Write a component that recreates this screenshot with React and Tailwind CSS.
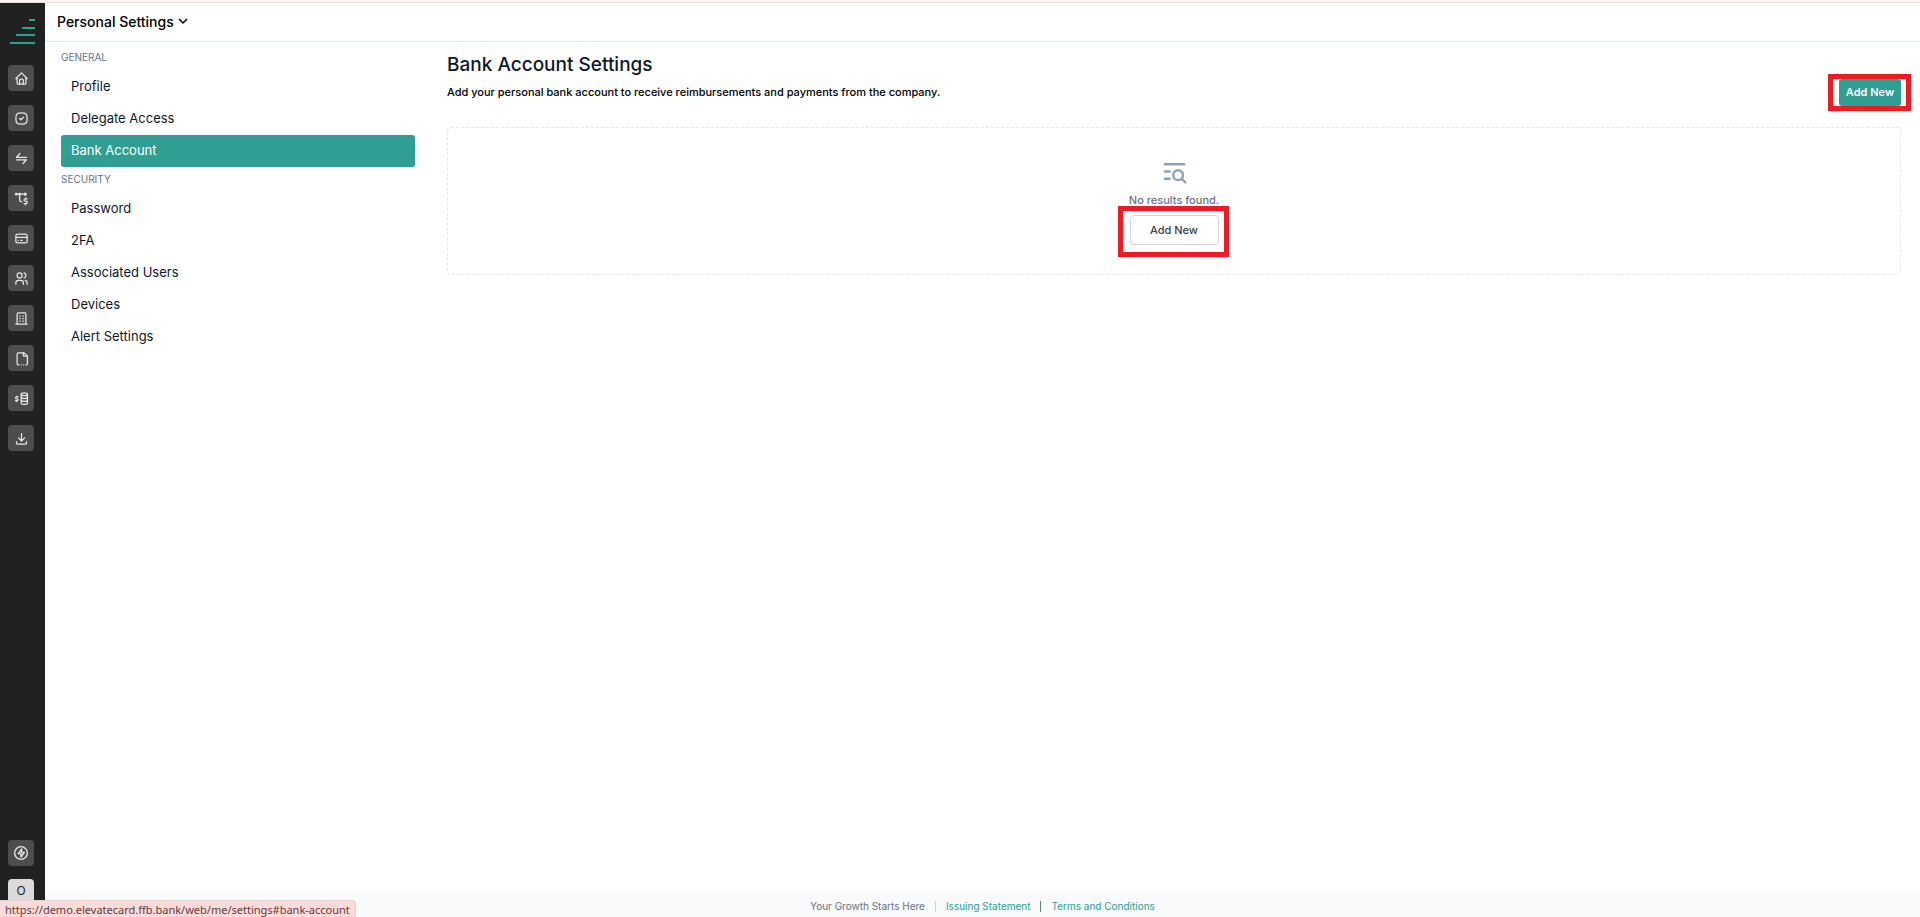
import clsx from 'clsx'

const NAV = [
  {
    title: 'General',
    items: ['Profile', 'Delegate Access', 'Bank Account'],
  },
  {
    title: 'Security',
    items: ['Password', '2FA', 'Associated Users', 'Devices', 'Alert Settings'],
  },
]

const ICONS = {
  Home: (
    <>
      <path d="M5 12H3l9-9 9 9h-2" />
      <path d="M5 12v7a2 2 0 0 0 2 2h10a2 2 0 0 0 2-2v-7" />
      <path d="M9 21v-6a2 2 0 0 1 2-2h2a2 2 0 0 1 2 2v6" />
    </>
  ),
  Approvals: (
    <>
      <path d="M9 12l2 2 4-4" />
      <path d="M12 3c7.2 0 9 1.8 9 9s-1.8 9-9 9-9-1.8-9-9 1.8-9 9-9z" />
    </>
  ),
  Transactions: (
    <>
      <path d="M20 10H4l5.5-6" />
      <path d="M4 14h16l-5.5 6" />
    </>
  ),
  'Spend Rules': (
    <>
      <circle cx="3.5" cy="5" r="1.2" fill="currentColor" />
      <circle cx="9" cy="5" r="1.2" fill="currentColor" />
      <circle cx="18" cy="5" r="1.6" fill="currentColor" />
      <path d="M4 5h13M9 5v9a3 3 0 0 0 3 3h.5" />
      <path d="M21 12.5h-3a1.8 1.8 0 0 0 0 3.8h1.400a1.800 1.800 0 0 1 0 3.700H16M18.500 11v1.500M18.500 20v2" />
    </>
  ),
  Cards: (
    <>
      <rect x="3" y="5" width="18" height="14" rx="3" />
      <path d="M3 10h18M7 15h.01M11 15h2" />
    </>
  ),
  Users: (
    <>
      <circle cx="9" cy="7" r="4" />
      <path d="M3 21v-2a4 4 0 0 1 4-4h4a4 4 0 0 1 4 4v2" />
      <path d="M16 3.13a4 4 0 0 1 0 7.75M21 21v-2a4 4 0 0 0-3-3.85" />
    </>
  ),
  Company: (
    <>
      <path d="M3 21h18M5 21V5a2 2 0 0 1 2-2h10a2 2 0 0 1 2 2v16" />
      <path d="M9 8h1M9 12h1M9 16h1M14 8h1M14 12h1M14 16h1" />
    </>
  ),
  Statements: (
    <>
      <path d="M15 3v4a1 1 0 0 0 1 1h5" />
      <path d="M8 22H7a2 2 0 0 1-2-2V5a2 2 0 0 1 2-2h9l5.500 5.500V20a2 2 0 0 1-2 2H19M12 22h.01M15.500 22h.01" />
    </>
  ),
  Rebates: (
    <>
      <ellipse cx="16.5" cy="5" rx="5" ry="2.2" />
      <path d="M11.500 5v14c0 1.300 2.200 2.400 5 2.400s5-1.100 5-2.400V5" />
      <path d="M11.500 9.700c0 1.300 2.200 2.300 5 2.300s5-1 5-2.300M11.500 14.400c0 1.300 2.200 2.300 5 2.300s5-1 5-2.300" />
      <path d="M6.500 9.500H4a1.500 1.500 0 0 0 0 3h1a1.500 1.500 0 0 1 0 3H2.500M4.500 8v1.500M4.500 15.500V17" />
    </>
  ),
  Downloads: (
    <>
      <path d="M4 17v2a2 2 0 0 0 2 2h12a2 2 0 0 0 2-2v-2" />
      <path d="M7 11l5 5 5-5M12 4v12" />
    </>
  ),
}

function StrokeIcon({ children, className }) {
  return (
    <svg
      className={className}
      viewBox="0 0 24 24"
      fill="none"
      stroke="currentColor"
      strokeWidth="2"
      strokeLinecap="round"
      strokeLinejoin="round"
      aria-hidden="true"
    >
      {children}
    </svg>
  )
}

function RailButton({ label, children }) {
  return (
    <button
      aria-label={label}
      className="flex size-[26px] items-center justify-center rounded bg-[#4d4d4d] text-[#e6e6e6]"
    >
      {children}
    </button>
  )
}

function Rail() {
  return (
    <aside className="flex w-[45px] shrink-0 flex-col bg-[#212121] px-2 pt-4 pb-3">
      <a href="#home" aria-label="Dashboard" className="block">
        <svg className="h-[25px] w-[27px] text-[#2f9e93]" viewBox="0 0 27 25" fill="currentColor" aria-hidden="true">
          <rect x="21" y="0" width="6" height="2" />
          <rect x="14" y="8" width="13" height="2" />
          <rect x="8" y="15" width="19" height="2" />
          <rect x="2" y="23" width="25" height="2" />
        </svg>
      </a>
      <nav className="mt-[21px] flex flex-col gap-[14px]">
        {Object.entries(ICONS).map(([label, icon]) => (
          <RailButton key={label} label={label}>
            <StrokeIcon className="size-[15px]">{icon}</StrokeIcon>
          </RailButton>
        ))}
      </nav>
      <div className="mt-auto flex flex-col gap-[13px]">
        <RailButton label="Quick actions">
          <StrokeIcon className="size-4">
            <circle cx="12" cy="12" r="9.5" />
            <path d="M13 6l-5 7h4v5l5-7h-4V6z" />
          </StrokeIcon>
        </RailButton>
        <button className="size-[26px] rounded-sm bg-[#dadada] pb-[2px] text-[12px] text-[#222]">O</button>
      </div>
    </aside>
  )
}

function SettingsNav({ active }) {
  return (
    <nav className="w-[354px] shrink-0">
      {NAV.map((group) => (
        <div key={group.title}>
          <h2 className="pb-[2px] text-[10px] leading-6 text-slate-500 uppercase">{group.title}</h2>
          {group.items.map((item) => (
            <a
              key={item}
              href="#settings"
              className={clsx(
                'block rounded-[3px] px-[10px] pb-[2px] text-[13px] leading-[30px]',
                item === active ? 'bg-[#2f9e93] text-white' : 'text-slate-900',
              )}
            >
              {item}
            </a>
          ))}
        </div>
      ))}
    </nav>
  )
}

export default function App() {
  return (
    <div className="relative flex h-screen flex-col overflow-hidden bg-white font-['Inter',sans-serif] text-slate-900">
      <div className="h-[3px] shrink-0 border-b border-[#f5d9d6] bg-[#fff8f7]" />
      <div className="flex min-h-0 flex-1">
        <Rail />

        <div className="flex min-w-0 flex-1 flex-col">
          <header className="flex h-[39px] shrink-0 items-center border-b border-slate-200 px-3 pb-[2px]">
            <button className="flex items-center gap-1 text-[14px] font-medium text-black">
              Personal Settings
              <svg className="h-[7px] w-[10px]" viewBox="0 0 10 7" fill="none" stroke="currentColor" strokeWidth="1.5" aria-hidden="true">
                <path d="M1 1l4 4 4-4" />
              </svg>
            </button>
          </header>

          <div className="flex flex-1 gap-8 pt-[3px] pr-[19px] pl-4">
            <SettingsNav active="Bank Account" />

            <main className="min-w-0 flex-1 pt-[6px]">
              <h1 className="text-[19px] leading-7 font-medium">Bank Account Settings</h1>
              <div className="flex items-start justify-between">
                <p className="text-[11px] leading-[27px] font-medium text-black">
                  Add your personal bank account to receive reimbursements and payments from the company.
                </p>
                <div className="relative">
                  <button className="block h-[27px] w-[62px] rounded-[3px] bg-[#2f9e93] text-[11px] font-semibold text-white">
                    Add New
                  </button>
                  <div className="pointer-events-none absolute -top-[5px] -right-[10px] -bottom-[5px] -left-[11px] border-5 border-[#ed1c24]" />
                </div>
              </div>

              <section className="mt-[21px] flex flex-col items-center rounded border border-dashed border-slate-200 py-[29px]">
                <StrokeIcon className="size-[29px] text-slate-400">
                  <circle cx="15" cy="15" r="4" />
                  <path d="M18.5 18.5L21 21M4 6h16M4 12h4M4 18h4" />
                </StrokeIcon>
                <p className="mt-[6px] text-[11px] leading-4 font-medium text-gray-500">No results found.</p>
                <div className="relative mt-[7px]">
                  <button className="block h-[30px] w-[89px] rounded border border-gray-300 text-[11px] font-medium text-gray-700">
                    Add New
                  </button>
                  <div className="pointer-events-none absolute -top-[9px] -right-[10px] -bottom-3 -left-3 border-5 border-[#ed1c24]" />
                </div>
              </section>
            </main>
          </div>

          <footer className="flex h-6 shrink-0 items-center justify-center gap-[10px] bg-slate-50 pt-[2px] text-[10px] text-gray-500">
            <span>Your Growth Starts Here</span>
            <span className="h-[11px] w-px bg-slate-300" />
            <a href="#issuing" className="text-[#2f9e93]">Issuing Statement</a>
            <span className="h-[11px] w-px bg-[#4f8a80]" />
            <a href="#terms" className="text-[#2f9e93]">Terms and Conditions</a>
          </footer>
        </div>
      </div>

      {/* link target shown by the browser on hover */}
      <div className="absolute bottom-0 left-0 h-[17px] rounded-tr border-t border-r border-[#dcd3d3] bg-[#ffdad8] px-[5px] font-['Noto_Sans',sans-serif] text-[11px] leading-[18px] whitespace-nowrap text-[#5b403f]">
        https://demo.elevatecard.ffb.bank/web/me/settings#bank-account
      </div>
    </div>
  )
}
